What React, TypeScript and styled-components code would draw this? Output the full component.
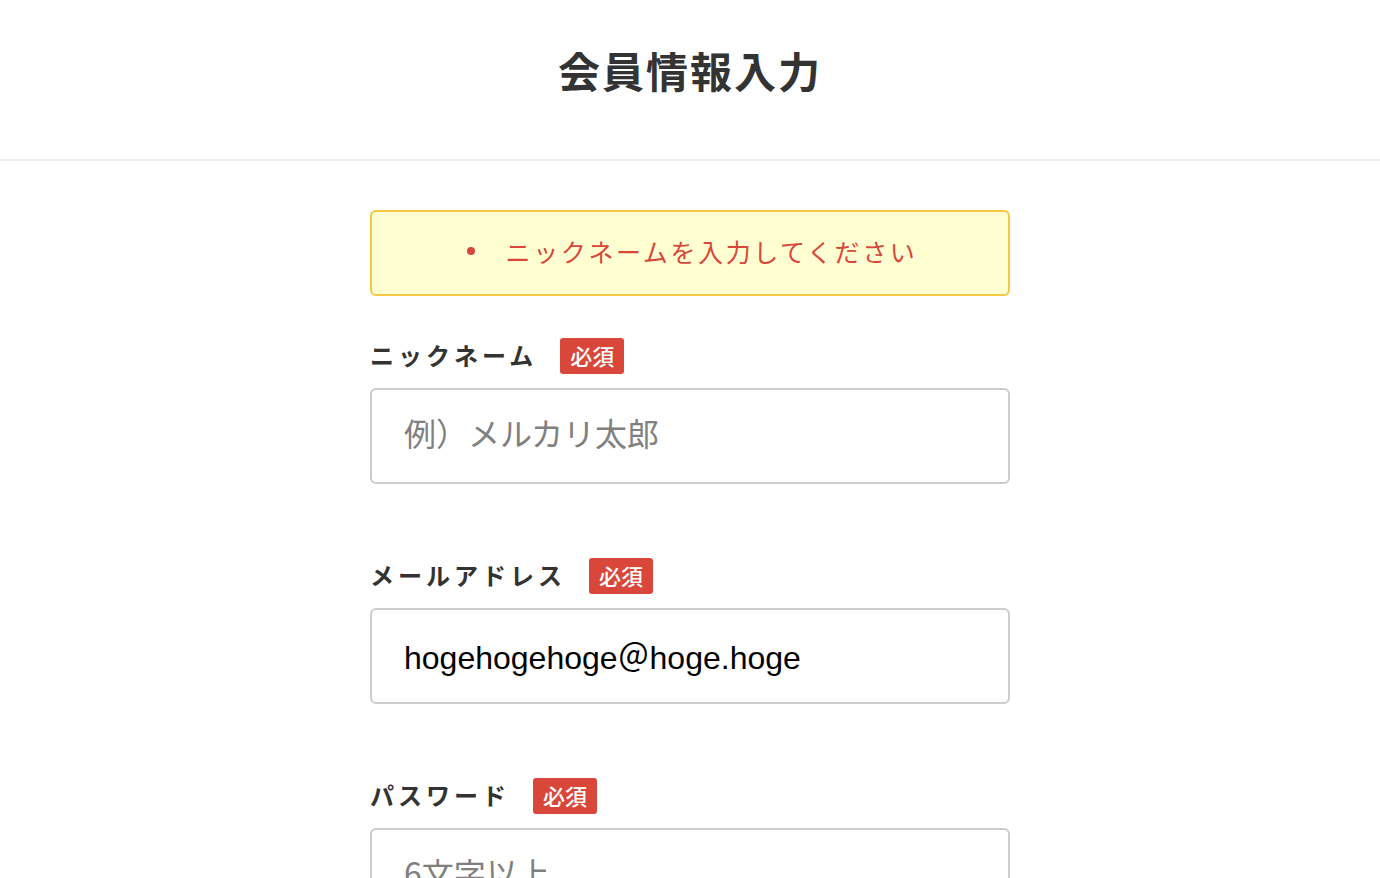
import React from "react";
import styled, { createGlobalStyle } from "styled-components";

const GlobalStyle = createGlobalStyle`
  html, body {
    margin: 0;
    padding: 0;
    background: #ffffff;
    font-family: "Noto Sans CJK JP", "Noto Sans", sans-serif;
    color: #333333;
  }
`;

const Header = styled.header`
  height: 161px;
  border-bottom: 2px solid #eeeeee;
  display: flex;
  justify-content: center;
  padding-top: 42px;
  box-sizing: border-box;
`;

const Title = styled.h1`
  margin: 0;
  font-size: 42px;
  line-height: 56px;
  font-weight: 700;
  letter-spacing: 2px;
  color: #333333;
`;

const Form = styled.form`
  width: 640px;
  margin: 0 auto;
  padding-top: 49px;
`;

const ErrorBox = styled.ul`
  margin: 0 0 42px;
  height: 86px;
  box-sizing: border-box;
  border: 2px solid #f6c944;
  border-radius: 6px;
  background: #ffffd1;
  display: flex;
  flex-direction: column;
  align-items: center;
  justify-content: center;
  padding: 0 0 5px;
  list-style: none;
`;

const ErrorItem = styled.li`
  display: flex;
  align-items: center;
  color: #d9463a;
  font-size: 25px;
  letter-spacing: 2.6px;
  padding-left: 4px;

  &::before {
    content: "";
    width: 8px;
    height: 8px;
    border-radius: 50%;
    background: #d9463a;
    margin-right: 31px;
  }
`;

const Field = styled.div`
  margin-bottom: 74px;
`;

const LabelRow = styled.div`
  display: flex;
  align-items: center;
  height: 36px;
  margin-bottom: 14px;
`;

const Label = styled.label`
  font-size: 24px;
  line-height: 36px;
  font-weight: 700;
  letter-spacing: 4px;
  color: #333333;
  margin-right: 23px;
  padding-bottom: 2px;
`;

const Required = styled.span`
  display: inline-flex;
  align-items: center;
  justify-content: center;
  height: 36px;
  padding: 0 10px 2px;
  box-sizing: border-box;
  background: #d9463a;
  color: #ffffff;
  font-size: 22px;
  font-weight: 500;
  border-radius: 3px;
`;

const Input = styled.input`
  display: block;
  width: 100%;
  height: 96px;
  box-sizing: border-box;
  border: 2px solid #cccccc;
  border-radius: 6px;
  padding: 0 32px 2px;
  font-size: 32px;
  font-family: "Liberation Sans", "Noto Sans CJK JP", sans-serif;
  color: #000000;
  outline: none;

  &::placeholder {
    color: #808080;
    font-family: "Noto Sans CJK JP", sans-serif;
  }
`;

const fields = [
  { label: "ニックネーム", placeholder: "例）メルカリ太郎", value: "", type: "text" },
  { label: "メールアドレス", placeholder: "", value: "hogehogehoge＠hoge.hoge", type: "text" },
  { label: "パスワード", placeholder: "6文字以上", value: "", type: "password" },
];

const App = () => {
  return (
    <>
      <GlobalStyle />
      <Header>
        <Title>会員情報入力</Title>
      </Header>
      <Form onSubmit={(e) => e.preventDefault()}>
        <ErrorBox>
          <ErrorItem>ニックネームを入力してください</ErrorItem>
        </ErrorBox>
        {fields.map((f, i) => (
          <Field key={i}>
            <LabelRow>
              <Label>{f.label}</Label>
              <Required>必須</Required>
            </LabelRow>
            <Input type={f.type} placeholder={f.placeholder} defaultValue={f.value} />
          </Field>
        ))}
      </Form>
    </>
  );
};

export default App;
